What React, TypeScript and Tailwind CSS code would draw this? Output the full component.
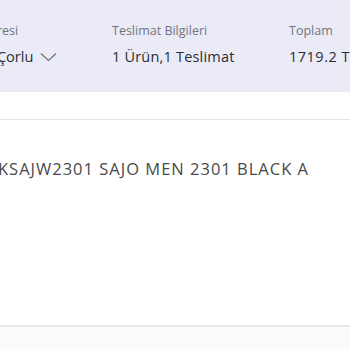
const App = () => {
  return (
    <div className="w-[350px] h-[350px] overflow-hidden bg-white" style={{ fontFamily: "'Open Sans', Lato, sans-serif" }}>
      <div className="h-[92px] bg-[#eaebf7] flex items-start pt-[22px]">
        <div className="flex flex-col shrink-0 w-[112px] ml-[-74px]">
          <span className="pl-[3px] text-[12.5px] leading-[18px] text-[#70757f] whitespace-nowrap">Teslimat Adresi</span>
          <div className="flex items-center gap-[7px] mt-[7px] whitespace-nowrap">
            <span className="text-[14.5px] leading-[20px] text-[#2b2d33] font-medium">Tekirdağ / Çorlu</span>
            <svg className="shrink-0" width="17" height="10" viewBox="0 0 17 10" fill="none" stroke="#6b6f78" strokeWidth="1.2">
              <path d="M1 1.5l7.5 7 7.5-7" />
            </svg>
          </div>
        </div>
        <div className="flex flex-col shrink-0 ml-[74px] w-[177px]">
          <span className="text-[12.5px] leading-[18px] text-[#70757f] whitespace-nowrap">Teslimat Bilgileri</span>
          <span className="text-[14.5px] leading-[20px] tracking-[0.2px] text-[#2b2d33] font-medium mt-[7px] whitespace-nowrap">1 Ürün,1 Teslimat</span>
        </div>
        <div className="flex flex-col shrink-0">
          <span className="text-[12.5px] leading-[18px] text-[#70757f] whitespace-nowrap">Toplam</span>
          <span className="text-[14.5px] leading-[20px] tracking-[0.5px] text-[#2b2d33] font-medium mt-[7px] whitespace-nowrap">1719.2 TL</span>
        </div>
      </div>
      <div className="h-[27px]" />
      <div className="border-t border-[#e5e5e5] h-[206px] flex items-start pt-[38px]">
        <span className="ml-[-2px] text-[16.5px] leading-[22px] tracking-[1px] text-[#4a4a4a] whitespace-nowrap">KSAJW2301 SAJO MEN 2301 BLACK A</span>
      </div>
      <div className="border-t-2 border-[#e8e8e8] h-full bg-[#fbfbfb]" />
    </div>
  )
}

export default App
